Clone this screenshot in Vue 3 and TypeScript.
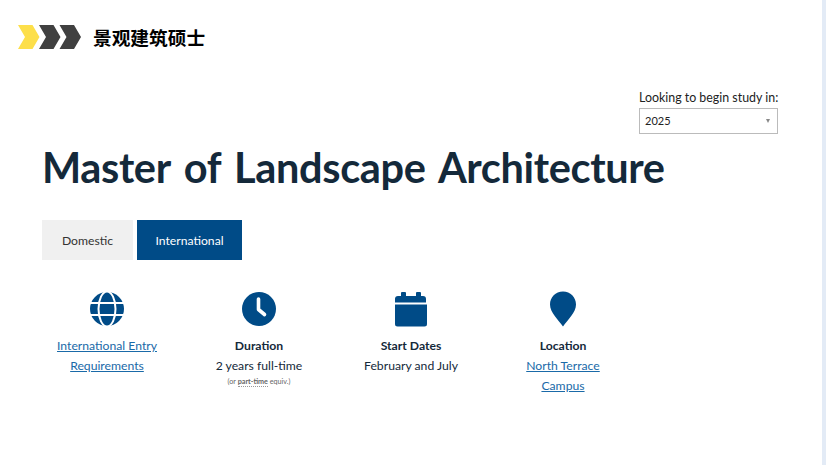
<script setup lang="ts">
const title = 'Master of Landscape Architecture'
</script>

<template>
  <div class="page">
    <main class="main">
      <header class="top">
        <svg class="chevrons" width="63" height="24" viewBox="0 0 63 24">
          <polygon points="0,0 14.500,0 21.500,12 14.500,24 0,24 7,12" fill="#fddf4a" />
          <polygon points="21,0 35.500,0 42.500,12 35.500,24 21,24 28,12" fill="#404040" />
          <polygon points="41.500,0 56,0 63,12 56,24 41.500,24 48.500,12" fill="#404040" />
        </svg>
        <span class="cn-title">景观建筑硕士</span>
      </header>

      <section class="study">
        <label class="study-label">Looking to begin study in:</label>
        <div class="select">
          <span>2025</span>
          <i class="caret"></i>
        </div>
      </section>

      <h1 class="title">{{ title }}</h1>

      <nav class="tabs">
        <a class="tab">Domestic</a>
        <a class="tab active">International</a>
      </nav>

      <section class="facts">
        <div class="fact">
          <svg class="icon" width="36" height="36" viewBox="0 0 36 36">
            <circle cx="18" cy="18" r="17" fill="#004b87" />
            <g fill="none" stroke="#fff" stroke-width="2">
              <ellipse cx="18" cy="18" rx="8.500" ry="17.500" />
              <path d="M0 12H36M0 24H36" />
            </g>
          </svg>
          <a class="link first">International Entry Requirements</a>
        </div>
        <div class="fact">
          <svg class="icon" width="36" height="36" viewBox="0 0 36 36">
            <circle cx="18" cy="18" r="17" fill="#004b87" />
            <path d="M17.500 8V18.500L23.500 23.500" fill="none" stroke="#fff" stroke-width="3.600" stroke-linecap="round" stroke-linejoin="round" />
          </svg>
          <strong>Duration</strong>
          <span>2 years full-time</span>
          <small>(or <b>part-time</b> equiv.)</small>
        </div>
        <div class="fact">
          <svg class="icon" width="36" height="36" viewBox="0 0 36 36">
            <path fill="#004b87" d="M9 1h3a1 1 0 0 1 1 1v3h10V2a1 1 0 0 1 1-1h3a1 1 0 0 1 1 1v3h2a3 3 0 0 1 3 3v3.500H2V8a3 3 0 0 1 3-3h3V2a1 1 0 0 1 1-1zM2 13.500h32V33a2.500 2.500 0 0 1-2.500 2.500h-27A2.500 2.500 0 0 1 2 33z" />
          </svg>
          <strong>Start Dates</strong>
          <span>February and July</span>
        </div>
        <div class="fact">
          <svg class="icon" width="36" height="36" viewBox="0 0 36 36">
            <path fill="#004b87" d="M18 0.500C10.500 0.500 5 6.300 5 13.500C5 21.500 13.500 29 18 35.500C22.500 29 31 21.500 31 13.500C31 6.300 25.500 0.500 18 0.500z" />
          </svg>
          <strong>Location</strong>
          <a class="link narrow">North Terrace Campus</a>
        </div>
      </section>
    </main>
    <div class="strip"></div>
  </div>
</template>

<style scoped>
.page {
  display: flex;
  width: 826px;
  height: 465px;
  overflow: hidden;
  background: #fff;
  font-family: Lato, "Open Sans", sans-serif;
  color: #14293a;
}

.main {
  flex: 1;
  min-width: 0;
}

.strip {
  width: 4px;
  background: #e3ebf6;
}

.top {
  display: flex;
  align-items: center;
  gap: 12px;
  padding: 25px 0 0 18px;
  height: 24px;
}

.cn-title {
  position: relative;
  top: -1px;
  font-family: "Noto Sans CJK SC", sans-serif;
  font-size: 18.700px;
  font-weight: 700;
  color: #000;
}

.study {
  width: 139px;
  margin: 41px 0 0 639px;
}

.study-label {
  display: block;
  font-size: 12.400px;
  line-height: 16px;
  color: #222;
  white-space: nowrap;
}

.select {
  display: flex;
  align-items: center;
  justify-content: space-between;
  box-sizing: border-box;
  height: 26px;
  margin-top: 2px;
  padding: 0 7px 1px 5px;
  border: 1px solid #bbb;
  font-size: 11px;
  color: #222;
}

.caret {
  border-left: 2.500px solid transparent;
  border-right: 2.500px solid transparent;
  border-top: 4px solid #888;
}

.title {
  margin: 8px 0 0 42px;
  font-size: 41.500px;
  line-height: 50px;
  font-weight: 700;
  letter-spacing: -0.35px;
  word-spacing: 4px;
  white-space: nowrap;
}

.tabs {
  display: flex;
  gap: 4px;
  margin: 28px 0 0 42px;
}

.tab {
  display: flex;
  align-items: center;
  justify-content: center;
  height: 40px;
  width: 91px;
  background: #f0f0f0;
  font-size: 12.200px;
  color: #333;
}

.tab.active {
  width: 105px;
  background: #004b87;
  color: #fff;
}

.facts {
  display: grid;
  grid-template-columns: repeat(4, 152px);
  margin: 31px 0 0 31px;
}

.fact {
  display: flex;
  flex-direction: column;
  align-items: center;
  text-align: center;
  font-size: 12.200px;
  line-height: 20px;
  white-space: nowrap;
}

.icon {
  margin-bottom: 9px;
}

.fact strong {
  font-weight: 700;
}

.fact small {
  font-size: 7.200px;
  line-height: 12px;
  color: #666;
}

.fact small b {
  border-bottom: 1px dotted #999;
}

.link {
  color: #1a6aa8;
  text-decoration: underline;
  white-space: normal;
}

.link.first {
  width: 110px;
}

.link.narrow {
  width: 80px;
}
</style>
